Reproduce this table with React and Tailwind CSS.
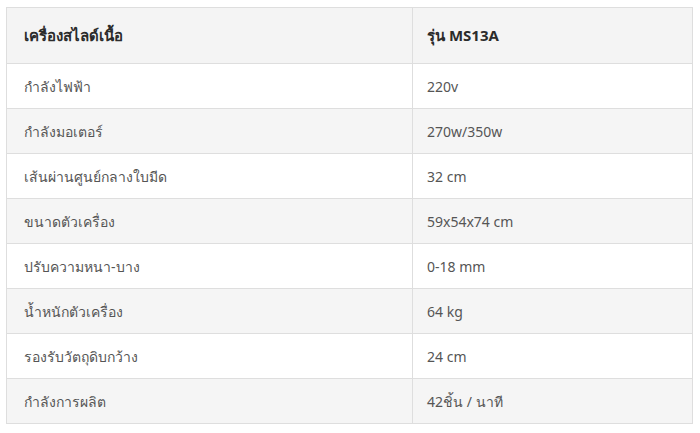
import React from 'react';

const rows = [
    ['กำลังไฟฟ้า', '220v'],
    ['กำลังมอเตอร์', '270w/350w'],
    ['เส้นผ่านศูนย์กลางใบมีด', '32 cm'],
    ['ขนาดตัวเครื่อง', '59x54x74 cm'],
    ['ปรับความหนา-บาง', '0-18 mm'],
    ['น้ำหนักตัวเครื่อง', '64 kg'],
    ['รองรับวัตถุดิบกว้าง', '24 cm'],
    ['กำลังการผลิต', '42ชิ้น / นาที'],
];

const App = () => {
    return (
        <div className="w-[700px] h-[433px] bg-white pt-[7px] pl-[6px] font-['Noto_Sans',sans-serif]">
            <table className="w-[687px] border-collapse border border-[#dedede] text-[14px]">
                <colgroup>
                    <col className="w-[406px]" />
                    <col />
                </colgroup>
                <thead>
                    <tr className="h-[56px] bg-[#f4f4f4]">
                        <th className="border border-[#dedede] pl-[17px] text-left text-[15px] font-bold text-[#2b2b2b]">เครื่องสไลด์เนื้อ</th>
                        <th className="border border-[#dedede] pl-[14px] text-left text-[15px] font-bold text-[#2b2b2b]">รุ่น MS13A</th>
                    </tr>
                </thead>
                <tbody>
                    {rows.map(([label, value], i) => (
                        <tr key={i} className={i % 2 === 1 ? 'h-[45px] bg-[#f5f5f5]' : 'h-[45px] bg-white'}>
                            <td className="border border-[#dedede] pl-[17px] text-[#555]">{label}</td>
                            <td className="border border-[#dedede] pl-[14px] text-[#555]">{value}</td>
                        </tr>
                    ))}
                </tbody>
            </table>
        </div>
    );
};

export default App;
